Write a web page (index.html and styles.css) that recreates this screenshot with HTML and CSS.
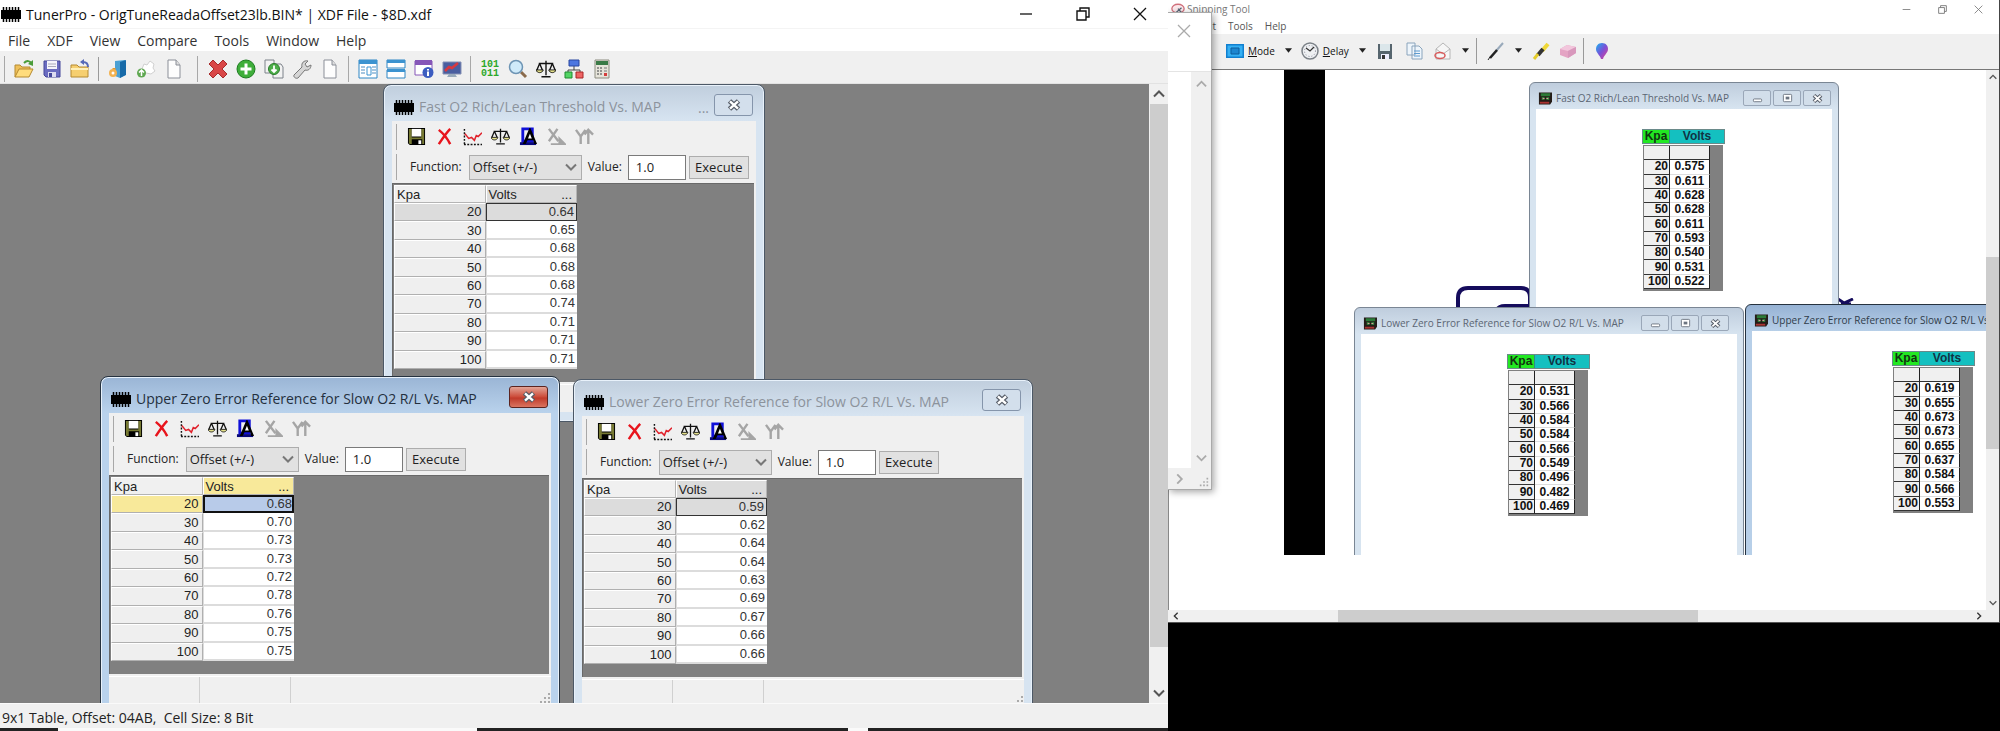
FILE: index.html
```html
<!DOCTYPE html>
<html lang="en">
<head>
<meta charset="utf-8">
<title>TunerPro</title>
<link rel="stylesheet" href="styles.css">
</head>
<body>
<svg class="defs" aria-hidden="true">
  <symbol id="chip" viewBox="0 0 20 15"><path d="M0 3h20v9H0z"/><path d="M2.500 0v15M5.500 0v15M8.500 0v15M11.500 0v15M14.500 0v15M17.500 0v15" stroke="#000" stroke-width="1.500"/></symbol>
  <symbol id="close" viewBox="0 0 14 12"><path d="M2.500 2l9 8M11.500 2l-9 8" stroke="#555b66" stroke-width="5"/><path d="M3 2.400l8 7.200M11 2.400l-8 7.200" stroke="#fff" stroke-width="2.400"/></symbol>
  <symbol id="mini" viewBox="0 0 12 12"><rect x="1.500" y="6.500" width="9" height="3" rx="1" fill="#fff" stroke="#6b7480"/></symbol>
  <symbol id="maxi" viewBox="0 0 12 12"><rect x="1.500" y="1.500" width="9" height="8" rx="1" fill="#fff" stroke="#6b7480"/><path d="M4 4h4v3H4z" fill="#6b7480"/></symbol>
  <symbol id="disk" viewBox="0 0 20 20"><path d="M1 1h18v18H3l-2-2z"/><path d="M2 2h3v9h10V2h3v16h-2v-5H5v5H3l-1-1z" fill="#777a33"/><path d="M5 2h10v8H5z" fill="#fff"/><path d="M12 14h3v4h-3z" fill="#fff"/></symbol>
  <symbol id="redx" viewBox="0 0 20 20"><path d="M4 3c5 4 9 9 12 15M16 2C12 6 8 12 4 18" fill="none" stroke="#e8141c" stroke-width="2.600"/></symbol>
  <symbol id="chart" viewBox="0 0 20 20"><path d="M1.500 2v17M1 18.500h19" stroke="#111" stroke-width="1.500" stroke-dasharray="2 1.500"/><path d="M2 7l4 5 3-1 3 3 2-5 2 1 4-4" fill="none" stroke="#e0202a" stroke-width="1.600"/></symbol>
  <symbol id="scales" viewBox="0 0 22 20"><path d="M11 1v16M6 18.500h10M3 4h16M4 4l-3 7M4 4l3 7M18 4l-3 7M18 4l3 7" fill="none" stroke="#111" stroke-width="1.500"/><path d="M0 11h8c-1 4-7 4-8 0zM14 11h8c-1 4-7 4-8 0z" fill="#e4e08a" stroke="#111"/></symbol>
  <symbol id="metro" viewBox="0 0 20 20"><path d="M4 2h10v13H4z" fill="none" stroke="#1010d8" stroke-width="3"/><path d="M1 16h17v3H1z" fill="#08087a"/><path d="M12 1l7 17h-3l-1-4H9l-2 4H4l7-17z"/><path d="M11.500 7l2 5h-4z" fill="#fff"/></symbol>
  <symbol id="xaxis" viewBox="0 0 20 20"><path d="M2 2l10 13M11 2L2 15" fill="none" stroke="#a5a5a5" stroke-width="2.500"/><path d="M4 18h15M13 12l6 6h-6z" fill="#a5a5a5" stroke="#a5a5a5" stroke-width="2"/></symbol>
  <symbol id="yaxis" viewBox="0 0 20 20"><path d="M1 3l5 7 5-7M6 10v8M14 18V3M10 8l4-5 5 5" fill="none" stroke="#a5a5a5" stroke-width="2.500"/></symbol>
  <symbol id="chev" viewBox="0 0 12 8"><path d="M1 1.500l5 5 5-5" fill="none" stroke="currentColor" stroke-width="2"/></symbol>
  <symbol id="grip" viewBox="0 0 12 12"><path d="M9 1h2v2H9zM5 5h2v2H5zM9 5h2v2H9zM1 9h2v2H1zM5 9h2v2H5zM9 9h2v2H9z" fill="#aaa"/></symbol>
  <symbol id="page" viewBox="0 0 20 20"><path d="M4 1h8l4 5v13H4z" fill="#fdfdfd" stroke="#8b8f98"/><path d="M12 1v5h4" fill="#ddd" stroke="#8b8f98"/></symbol>
  <symbol id="board" viewBox="0 0 15 13"><path d="M1 0h14v10l-2 3H1z" fill="#241c18"/><path d="M3 1h10v3H3zM4 5h3v3H4zM9 5h3v3H9z" fill="#2c7a38"/><path d="M2 10h10v2H2z" fill="#a33"/><path d="M5 6h2v1H5zM9 6h2v1H9z" fill="#d99"/></symbol>
  <symbol id="drop" viewBox="0 0 8 5"><path d="M0 0h8L4 5z" fill="#222"/></symbol>
  <symbol id="cross" viewBox="0 0 14 14"><path d="M1 1l12 12M13 1L1 13" stroke="currentColor" stroke-width="1.300"/></symbol>
  <symbol id="restore" viewBox="0 0 14 14"><path d="M1 4h9v9H1zM4 4V1h9v9h-3" fill="none" stroke="currentColor" stroke-width="1.400"/></symbol>
  <symbol id="dash" viewBox="0 0 14 14"><path d="M1 7h12" stroke="currentColor" stroke-width="1.300"/></symbol>
</svg>

<div class="screen">
<main class="tuner">
  <header class="tuner-title">
    <svg class="chip"><use href="#chip"/></svg>
    <h1>TunerPro - OrigTuneReadaOffset23lb.BIN* | XDF File - $8D.xdf</h1>
    <div class="sysbuttons">
      <button aria-label="Minimize"><svg><use href="#dash"/></svg></button>
      <button aria-label="Restore"><svg><use href="#restore"/></svg></button>
      <button aria-label="Close"><svg><use href="#cross"/></svg></button>
    </div>
  </header>
  <nav class="tuner-menu">
    <button>File</button><button>XDF</button><button>View</button><button>Compare</button><button>Tools</button><button>Window</button><button>Help</button>
  </nav>
  <div class="tuner-tools">
    <span class="handle"></span>
    <button aria-label="Open"><svg viewBox="0 0 20 20"><path d="M1 18V6h5l2 2h8v3" fill="#eec05a" stroke="#b58a30"/><path d="M1 18l4-8h14l-4 8z" fill="#ffdc7c" stroke="#b58a30"/><path d="M10 4c3-3 6-2 7 0" fill="none" stroke="#4a9c3a" stroke-width="2"/><path d="M19 1v6l-5-2z" fill="#4a9c3a"/></svg></button>
    <button aria-label="Save"><svg viewBox="0 0 20 20"><path d="M2 2h16v16H4l-2-2z" fill="#6a6cc0" stroke="#44479a"/><path d="M5 2h10v8H5z" fill="#f4f4fb"/><path d="M6 5h8M6 7.500h8" stroke="#aab"/><path d="M6 13h8v5H6z" fill="#dcdcf0"/><path d="M7 14h3v4H7z" fill="#44479a"/></svg></button>
    <button aria-label="Close file"><svg viewBox="0 0 20 20"><path d="M1 18V6h6l2 2h9v10z" fill="#f6cf70" stroke="#b58a30"/><path d="M1 10h17" stroke="#fff0b8" stroke-width="2"/><path d="M18 8c0-4-2-5-5-5" fill="none" stroke="#5669b8" stroke-width="2"/><path d="M14 0v6l-4-3z" fill="#5669b8"/></svg></button>
    <span class="rule"></span>
    <button aria-label="Load definition"><svg viewBox="0 0 20 20"><path d="M7 2l10-1v15l-5 3-5-2z" fill="#4aa0d4"/><path d="M12 3l6-2v15l-6 3z" fill="#176aa8"/><path d="M6 9v5" stroke="#e69a2c" stroke-width="3"/><circle cx="5" cy="14" r="4" fill="#f3b250"/><circle cx="5" cy="14" r="1.500" fill="#fff"/></svg></button>
    <button aria-label="New definition"><svg viewBox="0 0 20 20"><path d="M8 5l3 1 3-4 4 3-1 4 2 3-4 3-5-1-4-4z" fill="#fff" stroke="#d0d0d0"/><circle cx="5.500" cy="14" r="4.500" fill="#5fa851"/><path d="M5.500 11v6M3 13.500l2.500-2.500L8 13.500" fill="none" stroke="#fff" stroke-width="1.500"/></svg></button>
    <button aria-label="Blank"><svg><use href="#page"/></svg></button>
    <span class="handle wide"></span>
    <button aria-label="Delete"><svg viewBox="0 0 20 20"><path d="M5 1l5 5 5-5 4 4-5 5 5 5-4 4-5-5-5 5-4-4 5-5-5-5z" fill="#d94747" stroke="#a82c2c"/></svg></button>
    <button aria-label="Add"><svg viewBox="0 0 20 20"><circle cx="10" cy="10" r="9" fill="#3fae3a" stroke="#1d7c20"/><path d="M10 4.500v11M4.500 10h11" stroke="#fff" stroke-width="3"/></svg></button>
    <button aria-label="Duplicate"><svg viewBox="0 0 20 20"><path d="M1 1h9v13H1zM9 5h8l2 3v11H9z" fill="#f2f2f2" stroke="#7d828a"/><circle cx="10" cy="10" r="5.500" fill="#4cae48" stroke="#2a7c2a"/><path d="M10 6.500v6M7.500 10.500L10 13l2.500-2.500" fill="none" stroke="#fff" stroke-width="1.800"/></svg></button>
    <button aria-label="Settings"><svg viewBox="0 0 20 20"><path d="M2 16l8-8c-1-4 2-7 6-6l-3 3 2 3 4-2c0 4-3 6-6 5l-7 8c-2 1-5-1-4-3z" fill="#d6d6d6" stroke="#777"/></svg></button>
    <button aria-label="Notes"><svg><use href="#page"/></svg></button>
    <span class="handle"></span>
    <button aria-label="Tree view"><svg viewBox="0 0 20 20"><path d="M1 1h18v18H1z" fill="#fff" stroke="#2e86c4"/><path d="M1 1h18v4H1z" fill="#3c93d0"/><path d="M3 8h4M3 11h4M3 14h4M14 8h4M14 11h4M14 14h4" stroke="#89b4d6" stroke-width="1.500"/><path d="M9 8h4v8H9z" fill="none" stroke="#3c93d0"/></svg></button>
    <button aria-label="Tile"><svg viewBox="0 0 20 20"><path d="M1 1h18v8H1zM1 11h18v8H1z" fill="#fff" stroke="#2e86c4"/><path d="M1 1h18v3H1zM1 10h18v3H1z" fill="#3c93d0"/></svg></button>
    <button aria-label="Item info"><svg viewBox="0 0 20 20"><path d="M1 2h17v14H1z" fill="#fff" stroke="#8656b8"/><path d="M1 1h17v5H1z" fill="#8656b8"/><circle cx="14" cy="13.500" r="5.500" fill="#3c5cc0"/><path d="M14 10v1.500M14 12.500V17" stroke="#fff" stroke-width="2"/></svg></button>
    <button aria-label="Monitor"><svg viewBox="0 0 20 20"><path d="M1 3h18v12H1z" fill="#4a5ea0" stroke="#8490b4"/><path d="M3 12l4-4 3 1 6-5" fill="none" stroke="#d83840" stroke-width="2.500"/><path d="M7 15h6l2 3H5z" fill="#9ab"/></svg></button>
    <span class="handle"></span>
    <button aria-label="Hex editor" class="bits"><span>101</span><span>011</span></button>
    <button aria-label="Find"><svg viewBox="0 0 20 20"><path d="M13 13l5 5" stroke="#8a6a4c" stroke-width="3"/><circle cx="8" cy="8" r="6.500" fill="#cfeafa" stroke="#6d94b4" stroke-width="1.500"/></svg></button>
    <button aria-label="Compare"><svg><use href="#scales"/></svg></button>
    <button aria-label="Hierarchy"><svg viewBox="0 0 20 20"><path d="M10 7v4M4 13v-2h12v2" fill="none" stroke="#444"/><path d="M5 1h10v6H5z" fill="#4c76e0" stroke="#2846a0"/><path d="M1 13h7v6H1z" fill="#53d465" stroke="#218a30"/><path d="M12 13h7v6h-7z" fill="#ee6464" stroke="#a82424"/></svg></button>
    <button aria-label="Calculator"><svg viewBox="0 0 20 20"><path d="M3 1h14v18H3z" fill="#e6e4da" stroke="#8c8c80"/><path d="M4 2h12v4H4z" fill="#3a7a46"/><path d="M5 9h6M5 12h6M5 15h6" stroke="#777" stroke-width="1.600" stroke-dasharray="2 1"/><path d="M12 9h3M12 12h3" stroke="#777"/><path d="M12 14h3v3h-3z" fill="#d43c3c"/></svg></button>
  </div>

  <div class="desk">
    <div class="workspace">
      <section class="win fast">
        <header class="win-title"><svg class="chip"><use href="#chip"/></svg><h2>Fast O2 Rich/Lean Threshold Vs. MAP</h2><span class="more">...</span><button class="win-close" aria-label="Close"><svg><use href="#close"/></svg></button></header>
        <div class="client">
          <div class="icons"><span class="handle"></span><button aria-label="Save"><svg><use href="#disk"/></svg></button><button aria-label="Discard"><svg><use href="#redx"/></svg></button><button aria-label="Graph"><svg><use href="#chart"/></svg></button><button aria-label="Compare"><svg><use href="#scales"/></svg></button><button aria-label="Trace"><svg><use href="#metro"/></svg></button><button aria-label="X axis"><svg><use href="#xaxis"/></svg></button><button aria-label="Y axis"><svg><use href="#yaxis"/></svg></button></div>
          <div class="func"><span class="handle"></span><label for="f1">Function:</label><span class="pick"><select id="f1"><option>Offset (+/-)</option></select><svg><use href="#chev"/></svg></span><label for="v1">Value:</label><input id="v1" type="text" value="1.0"><button>Execute</button></div>
          <div class="sheet">
            <table>
              <thead><tr><th><span>Kpa</span></th><th class="sel"><span>Volts<i>...</i></span></th></tr></thead>
              <tbody>
                <tr class="cur"><th>20</th><td>0.64</td></tr><tr><th>30</th><td>0.65</td></tr><tr><th>40</th><td>0.68</td></tr><tr><th>50</th><td>0.68</td></tr><tr><th>60</th><td>0.68</td></tr><tr><th>70</th><td>0.74</td></tr><tr><th>80</th><td>0.71</td></tr><tr><th>90</th><td>0.71</td></tr><tr><th>100</th><td>0.71</td></tr>
              </tbody>
            </table>
          </div>
          <footer class="win-status"><span></span><span></span><svg><use href="#grip"/></svg></footer>
        </div>
      </section>

      <section class="win lower">
        <header class="win-title"><svg class="chip"><use href="#chip"/></svg><h2>Lower Zero Error Reference for Slow O2 R/L Vs. MAP</h2><button class="win-close" aria-label="Close"><svg><use href="#close"/></svg></button></header>
        <div class="client">
          <div class="icons"><span class="handle"></span><button aria-label="Save"><svg><use href="#disk"/></svg></button><button aria-label="Discard"><svg><use href="#redx"/></svg></button><button aria-label="Graph"><svg><use href="#chart"/></svg></button><button aria-label="Compare"><svg><use href="#scales"/></svg></button><button aria-label="Trace"><svg><use href="#metro"/></svg></button><button aria-label="X axis"><svg><use href="#xaxis"/></svg></button><button aria-label="Y axis"><svg><use href="#yaxis"/></svg></button></div>
          <div class="func"><span class="handle"></span><label for="f2">Function:</label><span class="pick"><select id="f2"><option>Offset (+/-)</option></select><svg><use href="#chev"/></svg></span><label for="v2">Value:</label><input id="v2" type="text" value="1.0"><button>Execute</button></div>
          <div class="sheet">
            <table>
              <thead><tr><th><span>Kpa</span></th><th class="sel"><span>Volts<i>...</i></span></th></tr></thead>
              <tbody>
                <tr class="cur"><th>20</th><td>0.59</td></tr><tr><th>30</th><td>0.62</td></tr><tr><th>40</th><td>0.64</td></tr><tr><th>50</th><td>0.64</td></tr><tr><th>60</th><td>0.63</td></tr><tr><th>70</th><td>0.69</td></tr><tr><th>80</th><td>0.67</td></tr><tr><th>90</th><td>0.66</td></tr><tr><th>100</th><td>0.66</td></tr>
              </tbody>
            </table>
          </div>
          <footer class="win-status"><span></span><span></span><svg><use href="#grip"/></svg></footer>
        </div>
      </section>

      <section class="win upper active">
        <header class="win-title"><svg class="chip"><use href="#chip"/></svg><h2>Upper Zero Error Reference for Slow O2 R/L Vs. MAP</h2><button class="win-close" aria-label="Close"><svg><use href="#close"/></svg></button></header>
        <div class="client">
          <div class="icons"><span class="handle"></span><button aria-label="Save"><svg><use href="#disk"/></svg></button><button aria-label="Discard"><svg><use href="#redx"/></svg></button><button aria-label="Graph"><svg><use href="#chart"/></svg></button><button aria-label="Compare"><svg><use href="#scales"/></svg></button><button aria-label="Trace"><svg><use href="#metro"/></svg></button><button aria-label="X axis"><svg><use href="#xaxis"/></svg></button><button aria-label="Y axis"><svg><use href="#yaxis"/></svg></button></div>
          <div class="func"><span class="handle"></span><label for="f3">Function:</label><span class="pick"><select id="f3"><option>Offset (+/-)</option></select><svg><use href="#chev"/></svg></span><label for="v3">Value:</label><input id="v3" type="text" value="1.0"><button>Execute</button></div>
          <div class="sheet">
            <table>
              <thead><tr><th><span>Kpa</span></th><th class="sel"><span>Volts<i>...</i></span></th></tr></thead>
              <tbody>
                <tr class="cur"><th>20</th><td>0.68</td></tr><tr><th>30</th><td>0.70</td></tr><tr><th>40</th><td>0.73</td></tr><tr><th>50</th><td>0.73</td></tr><tr><th>60</th><td>0.72</td></tr><tr><th>70</th><td>0.78</td></tr><tr><th>80</th><td>0.76</td></tr><tr><th>90</th><td>0.75</td></tr><tr><th>100</th><td>0.75</td></tr>
              </tbody>
            </table>
          </div>
          <footer class="win-status"><span></span><span></span><svg><use href="#grip"/></svg></footer>
        </div>
      </section>
    </div>
    <div class="vscroll">
      <button aria-label="Scroll up"><svg class="flip"><use href="#chev"/></svg></button>
      <div class="thumb"></div>
      <div class="track"></div>
      <button aria-label="Scroll down"><svg><use href="#chev"/></svg></button>
    </div>
  </div>
  <footer class="tuner-status">9x1 Table, Offset: 04AB,&nbsp; Cell Size: 8 Bit</footer>
  <div class="edge"><span class="dark a"></span><span class="light b"></span><span class="dark c"></span><span class="light d"></span><span class="dark e"></span></div>
</main>

<aside class="right">
  <section class="snip">
    <header class="snip-title">
      <svg class="logo" viewBox="0 0 16 14"><ellipse cx="8" cy="6" rx="7" ry="5" fill="#fbe9ec" stroke="#d0707c" stroke-width="1.500"/><path d="M4 12l8-7M8 6l6 7" stroke="#567" stroke-width="1.500"/></svg>
      <h1>Snipping Tool</h1>
      <div class="sysbuttons">
        <button aria-label="Minimize"><svg><use href="#dash"/></svg></button>
        <button aria-label="Restore"><svg><use href="#restore"/></svg></button>
        <button aria-label="Close"><svg><use href="#cross"/></svg></button>
      </div>
    </header>
    <nav class="snip-menu"><button class="edit">Edit</button><button>Tools</button><button>Help</button></nav>
    <div class="snip-tools">
      <button class="mode"><svg class="i18" viewBox="0 0 18 14"><path d="M0 0h18v14H0z" fill="#1180d0"/><path d="M1.500 1.500h15v11h-15z" fill="#35b0f4"/><path d="M5 4h8v6H5z" fill="#1d86d0" stroke="#0d5c9c"/></svg><span><u>M</u>ode</span><svg class="arrow"><use href="#drop"/></svg></button>
      <button class="delay"><svg class="i18" viewBox="0 0 18 18"><circle cx="9" cy="9" r="8" fill="#eef0f2" stroke="#7c8288" stroke-width="1.500"/><circle cx="9" cy="9" r="5.500" fill="none" stroke="#889" stroke-dasharray="1 2"/><path d="M5 6l4 3 4-4" fill="none" stroke="#333" stroke-width="1.200"/></svg><span><u>D</u>elay</span><svg class="arrow"><use href="#drop"/></svg></button>
      <button class="solo" aria-label="Save snip"><svg class="i18" viewBox="0 0 18 18"><path d="M2 2h14v15H2z" fill="#56656e"/><path d="M4 2h10v7H4z" fill="#dbe6ea"/><path d="M5 12h8v5H5z" fill="#eef"/><path d="M6 13h3v4H6z" fill="#333"/></svg></button>
      <button class="solo" aria-label="Copy"><svg class="i18" viewBox="0 0 18 18"><path d="M2 1h8v12H2zM7 4h7l3 3v10H7z" fill="#eef5fb" stroke="#8aa4bc"/><path d="M9 9h6M9 11.500h6M9 14h6" stroke="#5c9bd0"/></svg></button>
      <button class="solo" aria-label="Send"><svg class="i18" viewBox="0 0 18 18"><path d="M2 7l7-6 7 6v10H2z" fill="#f6f6f6" stroke="#b6b6b6"/><path d="M2 7l7 5 7-5" fill="none" stroke="#b6b6b6"/><ellipse cx="6" cy="13.500" rx="5" ry="3" fill="none" stroke="#d85a5a" stroke-width="1.500"/></svg><svg class="arrow"><use href="#drop"/></svg></button>
      <span class="bar"></span>
      <button class="solo" aria-label="Pen"><svg class="i18" viewBox="0 0 18 18"><path d="M16 1L9 9" stroke="#9ab" stroke-width="2"/><path d="M10 8l-7 8" stroke="#222" stroke-width="2.500"/><path d="M3 15l-2 3" stroke="#222"/></svg><svg class="arrow"><use href="#drop"/></svg></button>
      <button aria-label="Highlighter"><svg class="i18" viewBox="0 0 18 18"><path d="M16 2L10 9" stroke="#f0d838" stroke-width="4"/><path d="M11 7l-5 6" stroke="#333" stroke-width="4"/><path d="M6 12l-4 5" stroke="#e4cc2c" stroke-width="3"/></svg></button>
      <button aria-label="Eraser"><svg class="i18" viewBox="0 0 18 18"><path d="M1 7l7-4 9 2v6l-8 5-8-3z" fill="#e4a4c4"/><path d="M1 7l7-4 9 2-8 4z" fill="#f2c6dc"/><path d="M9 9v7l8-5V5z" fill="#d898bc"/></svg></button>
      <span class="bar"></span>
      <button aria-label="Edit with Paint 3D"><svg class="i18" viewBox="0 0 18 18"><defs><linearGradient id="pin" x1="0" x2="1" y2="1"><stop offset="0" stop-color="#18b4f0"/><stop offset=".5" stop-color="#7a50d8"/><stop offset="1" stop-color="#e8408c"/></linearGradient></defs><path d="M9 1c4 0 6 3 6 6 0 4-4 6-5 10H8c-1-4-5-6-5-10 0-3 2-6 6-6z" fill="url(#pin)"/></svg></button>
    </div>
    <div class="snip-body">
      <div class="canvas">
        <div class="shot">
          <svg class="scribble" viewBox="0 0 420 240"><path d="M133 240v-12q0-10 10-10h53q9 0 9 9v13M172 240q2-4 8-4h26" fill="none" stroke="#150c5c" stroke-width="4"/></svg>
          <svg class="scribble-end" viewBox="0 0 16 8"><path d="M0 1l6 4 9-4M3 6h10" fill="none" stroke="#150c5c" stroke-width="3"/></svg>
          <section class="mini-win m-fast">
            <header><svg class="board"><use href="#board"/></svg><h2>Fast O2 Rich/Lean Threshold Vs. MAP</h2><div class="mini-btns"><button aria-label="Minimize"><svg><use href="#mini"/></svg></button><button aria-label="Maximize"><svg><use href="#maxi"/></svg></button><button aria-label="Close"><svg><use href="#close"/></svg></button></div></header>
            <div class="mini-client"><div class="grid"><div class="caps"><b>Kpa</b><b>Volts</b></div><table>
              <tr class="blank"><th></th><td></td></tr><tr><th>20</th><td>0.575</td></tr><tr><th>30</th><td>0.611</td></tr><tr><th>40</th><td>0.628</td></tr><tr><th>50</th><td>0.628</td></tr><tr><th>60</th><td>0.611</td></tr><tr><th>70</th><td>0.593</td></tr><tr><th>80</th><td>0.540</td></tr><tr><th>90</th><td>0.531</td></tr><tr><th>100</th><td>0.522</td></tr></table></div></div>
          </section>
          <section class="mini-win m-lower">
            <header><svg class="board"><use href="#board"/></svg><h2>Lower Zero Error Reference for Slow O2 R/L Vs. MAP</h2><div class="mini-btns"><button aria-label="Minimize"><svg><use href="#mini"/></svg></button><button aria-label="Maximize"><svg><use href="#maxi"/></svg></button><button aria-label="Close"><svg><use href="#close"/></svg></button></div></header>
            <div class="mini-client"><div class="grid"><div class="caps"><b>Kpa</b><b>Volts</b></div><table>
              <tr class="blank"><th></th><td></td></tr><tr><th>20</th><td>0.531</td></tr><tr><th>30</th><td>0.566</td></tr><tr><th>40</th><td>0.584</td></tr><tr><th>50</th><td>0.584</td></tr><tr><th>60</th><td>0.566</td></tr><tr><th>70</th><td>0.549</td></tr><tr><th>80</th><td>0.496</td></tr><tr><th>90</th><td>0.482</td></tr><tr><th>100</th><td>0.469</td></tr></table></div></div>
          </section>
          <section class="mini-win m-upper">
            <header><svg class="board"><use href="#board"/></svg><h2>Upper Zero Error Reference for Slow O2 R/L Vs. MAP</h2></header>
            <div class="mini-client"><div class="grid"><div class="caps"><b>Kpa</b><b>Volts</b></div><table>
              <tr class="blank"><th></th><td></td></tr><tr><th>20</th><td>0.619</td></tr><tr><th>30</th><td>0.655</td></tr><tr><th>40</th><td>0.673</td></tr><tr><th>50</th><td>0.673</td></tr><tr><th>60</th><td>0.655</td></tr><tr><th>70</th><td>0.637</td></tr><tr><th>80</th><td>0.584</td></tr><tr><th>90</th><td>0.566</td></tr><tr><th>100</th><td>0.553</td></tr></table></div></div>
          </section>
        </div>
      </div>
      <div class="vscroll thin">
        <button aria-label="Scroll up"><svg class="flip"><use href="#chev"/></svg></button>
        <div class="track"></div>
        <div class="thumb"></div>
        <div class="track after"></div>
        <button aria-label="Scroll down"><svg><use href="#chev"/></svg></button>
      </div>
    </div>
    <div class="hscroll">
      <button aria-label="Scroll left"><svg class="left"><use href="#chev"/></svg></button>
      <div class="track"></div><div class="thumb"></div><div class="track after"></div>
      <button aria-label="Scroll right"><svg class="rightward"><use href="#chev"/></svg></button>
    </div>
  </section>
  <section class="popup">
    <header><button aria-label="Close"><svg><use href="#cross"/></svg></button></header>
    <div class="popup-body">
      <div class="popup-page"></div>
      <div class="popup-scroll"><svg class="flip"><use href="#chev"/></svg><svg><use href="#chev"/></svg></div>
    </div>
    <footer><svg class="rightward"><use href="#chev"/></svg><svg class="corner"><use href="#grip"/></svg></footer>
  </section>
</aside>
</div>
</body>
</html>
```

FILE: styles.css
```css
* { box-sizing: border-box; }
body { margin: 0; background: #000; color: #222; font-family: "Open Sans", "Noto Sans", sans-serif; font-size: 14px; }
h1, h2 { margin: 0; font-weight: 400; white-space: nowrap; }
button { border: 0; padding: 0; background: none; color: inherit; font: inherit; display: flex; align-items: center; justify-content: center; }
table { border-collapse: separate; border-spacing: 0; }
th, td { padding: 0; }
.defs { position: absolute; width: 0; height: 0; }
.screen { display: flex; height: 100vh; overflow: hidden; }
.chip { width: 20px; height: 15px; flex: none; }
.flip { transform: rotate(180deg); }
.left { transform: rotate(90deg); }
.rightward { transform: rotate(-90deg); }

/* TunerPro frame */
.tuner { width: 58.4%; flex: none; display: flex; flex-direction: column; background: #f0f0f0; }
.tuner-title { height: 29px; background: #fff; display: flex; align-items: center; padding-left: 1px; gap: 5px; border-bottom: 1px solid #f4f4f4; color: #111; }
.tuner-title h1 { font-size: 14px; }
.sysbuttons { margin-left: auto; display: flex; }
.tuner-title .sysbuttons button { width: 57px; }
.sysbuttons svg { width: 14px; height: 14px; }
.tuner-menu { height: 22px; background: #fff; display: flex; align-items: center; gap: 17px; padding-left: 8px; color: #333; }
.tuner-tools { height: 33px; display: flex; align-items: center; padding-top: 3px; border-bottom: 1px solid #e2e2e2; }
.tuner-tools button { width: 28px; height: 28px; }
.tuner-tools svg { width: 20px; height: 20px; }
.handle { flex: none; width: 10px; height: 26px; background: linear-gradient(#a8a8a8, #a8a8a8) 4px 0 / 1px 100% no-repeat; }
.handle.wide { width: 16px; background-position: 9px 0; }
.rule { width: 10px; height: 24px; background: linear-gradient(#9a9a9a, #9a9a9a) 4px 0 / 1px 100% no-repeat; }
.tuner-tools .bits { flex-direction: column; font: bold 10px/9px "Liberation Mono", monospace; color: #2da82a; }
.desk { flex: 1; display: flex; min-height: 0; }
.workspace { flex: 1; position: relative; overflow: hidden; background: #808080; }
.vscroll { width: 19px; flex: none; display: flex; flex-direction: column; background: #f0f0f0; color: #555; }
.vscroll button { height: 20px; }
.vscroll svg { width: 12px; height: 8px; }
.vscroll .thumb { flex: 543; background: #cdcdcd; margin-left: 1px; }
.vscroll .track { flex: 36; }
.tuner-status { height: 25px; padding: 4px 2px 0; line-height: 20px; font-size: 14px; border-top: 1px solid #fafafa; white-space: nowrap; }
.edge { height: 3px; display: flex; }
.dark { background: #222; }
.light { background: #fafafa; }
.a { flex: 58; } .b { flex: 419; } .c { flex: 371; } .d { flex: 20; } .e { flex: 300; }

/* Table windows */
.win { position: absolute; height: 338px; display: flex; flex-direction: column; padding: 0 8px 9px; border: 1px solid #4c5866; border-radius: 8px 8px 0 0; background: linear-gradient(#c0cedd, #d7e4f1 36px); box-shadow: inset 0 0 0 1px #e8f1fa; color: #8c939c; }
.fast { left: 383px; top: 0; width: 382px; }
.upper { left: 100px; top: 292px; width: 460px; }
.lower { left: 573px; top: 295px; width: 460px; }
.win.active { background: linear-gradient(#9ab5d5, #b9d2ec 36px); border-color: #26323f; color: #24303e; }
.win-title { height: 36px; display: flex; align-items: center; padding: 8px 3px 0 2px; flex: none; gap: 5px; }
.win-title h2 { font-size: 14px; line-height: 24px; }
.more { margin-left: auto; }
.win-close { width: 39px; height: 22px; margin-left: auto; margin-bottom: 4px; flex: none; border: 1px solid #8595ab; border-radius: 3px; background: #d3dfec; }
.more + .win-close { margin-left: 0; }
.win-close svg { width: 14px; height: 12px; }
.active .win-close { border-color: #5c2420; background: linear-gradient(#e3a597, #cc4a38 50%, #c03a2a 55%, #da7460); }
.client { flex: 1; min-height: 0; display: flex; flex-direction: column; background: #f0f0f0; color: #222; font-size: 13px; }
.icons, .func { height: 31px; flex: none; display: flex; align-items: center; }
.icons button { width: 28px; height: 28px; }
.icons svg { width: 19px; height: 19px; }
.func { padding-bottom: 1px; }
.func label { margin: 0 7px 0 8px; line-height: 20px; font-size: 12px; }
.func .pick + label { margin-left: 6px; margin-right: 6px; }
.pick { display: grid; align-items: center; width: 113px; height: 25px; }
.pick select, .pick svg { grid-area: 1 / 1; }
.pick select { appearance: none; width: 100%; height: 100%; border: 1px solid #adadad; border-radius: 0; background: #e1e1e1; padding: 0 3px; font: inherit; color: inherit; }
.pick svg { width: 12px; height: 8px; justify-self: end; margin-right: 5px; color: #777; pointer-events: none; }
.func input { width: 58px; height: 25px; border: 1px solid #7a7a7a; padding: 0 7px; background: #fff; font: inherit; color: inherit; }
.func button { width: 60px; height: 23px; margin-left: 3px; border: 1px solid #adadad; background: #e1e1e1; }
.sheet { flex: 1; min-height: 0; margin: 0 2px 2px 0; background: #808080; border-top: 1px solid #696969; border-left: 1px solid #696969; padding: 1px; font-family: "Liberation Sans", sans-serif; font-size: 13px; overflow: hidden; }
.sheet table { background: #e6e6e6; table-layout: fixed; width: 183px; height: 184px; }
.sheet th { font-weight: 400; }
.sheet thead th { height: 18px; border: 1px solid #b4b4b4; border-left-color: #fff; border-top-color: #fff; background: #f0f0f0; }
.sheet thead span { display: flex; justify-content: space-between; height: 16px; line-height: 18px; padding: 0 4px 0 2px; }
.sheet i { font-style: normal; }
.sheet thead .sel { background: #dcdcdc; }
.sheet tbody th, .sheet td { height: 18px; line-height: 16px; text-align: right; }
.sheet tbody th { padding: 0 3px 0 0; border: 1px solid #b0b0b0; border-left-color: #fff; border-top-color: #fff; background: #efefef; }
.sheet td { padding-right: 2px; background: #fff; border: 1px solid #dcdcdc; border-width: 0 0 2px 1px; color: #333; }
.sheet .cur th { background: #dcdcdc; }
.sheet .cur td { background: #dcdcdc; border: 1px solid #333; }
.active .sheet .cur th, .active .sheet .sel { background: #f8e99a; }
.active .sheet .cur td { background: #b8cbe9; border: 2px solid #111; line-height: 14px; padding-right: 0; }
.win-status { height: 28px; flex: none; display: flex; align-items: flex-end; border-top: 1px solid #fff; }
.win-status span { width: 91px; height: 100%; border-right: 1px solid #d0d0d0; }
.win-status svg { width: 12px; height: 12px; margin-left: auto; }

/* Snipping Tool */
.right { flex: 1; position: relative; min-width: 0; overflow: hidden; font-size: 10px; }
.snip { background: #fff; border-right: 1px solid #444; }
.snip-title { height: 18px; display: flex; align-items: center; padding-left: 3px; gap: 2px; color: #777; }
.snip-title h1 { font-size: 10px; }
.logo { width: 14px; height: 13px; }
.snip-title .sysbuttons button { width: 36px; }
.snip-title .sysbuttons svg { width: 9px; height: 9px; }
.snip-title .sysbuttons { padding-right: 3px; }
.snip-menu { height: 16px; display: flex; align-items: center; gap: 12px; color: #555; }
.snip-menu .edit { width: 48px; justify-content: flex-end; }
.snip-tools { height: 36px; padding: 0 0 2px 58px; background: #f0f0f0; border-bottom: 1px solid #777; display: flex; align-items: center; gap: 9px; color: #111; }
.snip-tools button { gap: 4px; }
.snip-tools .solo { padding: 0 1px; }
.i18 { width: 18px; height: 18px; }
.mode .i18 { height: 14px; }
.arrow { width: 7px; height: 5px; margin-left: 6px; }
.bar { width: 1px; height: 26px; background: #999; margin: 0 0 0 -3px; }
.snip-body { display: flex; }
.canvas { flex: 1; min-width: 0; padding: 0 0 55px 115px; border-left: 1px solid #888; }
.shot { height: 485px; position: relative; overflow: hidden; border-left: 41px solid #000; background: #fff; }
.scribble { position: absolute; left: 0; top: 0; width: 420px; height: 240px; }
.scribble-end { position: absolute; left: 513px; top: 228px; width: 16px; height: 8px; }
.mini-win { position: absolute; height: 330px; padding: 0 6px; border: 1px solid #7a8694; border-radius: 6px 6px 0 0; background: linear-gradient(#bfcddd, #d7e4f0 26px); color: #5c6674; }
.m-fast { left: 204px; top: 12px; width: 310px; }
.m-lower { left: 29px; top: 237px; width: 390px; }
.m-upper { left: 420px; top: 234px; width: 390px; background: linear-gradient(#96b2d4, #b7cfe8 26px); border-color: #26323f; color: #303c4a; }
.mini-win header { height: 26px; display: flex; align-items: center; padding: 4px 1px 0 2px; gap: 4px; }
.m-lower header { padding-right: 8px; }
.mini-win h2 { font-size: 10px; line-height: 18px; }
.board { width: 14px; height: 13px; flex: none; }
.mini-btns { display: flex; gap: 2px; margin-left: auto; }
.mini-btns button { width: 28px; height: 16px; border: 1px solid #9aa7b8; border-radius: 2px; background: #d2deea; }
.mini-btns svg { width: 11px; height: 11px; }
.mini-client { height: 100%; background: #fff; padding: 20px 0 0 106px; }
.m-lower .mini-client { padding-left: 146px; }
.m-upper .mini-client { padding-left: 140px; }
.grid { width: 83px; font: bold 12px/13px "Liberation Sans", sans-serif; color: #111; }
.caps { display: flex; height: 15px; border: 1px solid #6a8a8a; margin-bottom: 1px; }
.caps b { flex: 1; background: #14c0c0; text-align: center; color: #134; }
.caps b:first-child { flex: 0 0 27px; background: #22e822; border-right: 1px solid #388; color: #131; }
.grid table { width: 80px; height: 146px; margin-left: 1px; border: 1px solid #808080; border-width: 1px 13px 2px 1px; background: #fff; }
.grid th, .grid td { height: 14px; }
.grid th { width: 26px; text-align: right; padding-right: 1px; background: #f0f0f0; border-right: 1px solid #222; border-bottom: 1px solid #333; }
.grid td { text-align: center; border-right: 1px solid #222; border-bottom: 1px solid #ddd; }
.grid .blank td { background: #f0f0f0; border-bottom-color: #333; }
.grid tr:last-child td { border-bottom-color: #333; }
.thin { width: 13px; }
.thin button { height: 14px; }
.thin svg, .hscroll svg { width: 8px; height: 6px; }
.thin .track { flex: 173; }
.thin .thumb { flex: 192; margin: 0; }
.thin .after { flex: 147; }
.hscroll { height: 13px; display: flex; padding-right: 13px; background: #f0f0f0; border-bottom: 1px solid #555; color: #333; }
.hscroll button { width: 15px; }
.hscroll .track { flex: 155; }
.hscroll .thumb { flex: 359; background: #cdcdcd; }
.hscroll .after { flex: 273; }

/* Dialog edge overlapping the Snipping Tool */
.popup { position: absolute; left: 0; top: 12px; width: 44px; height: 478px; display: flex; flex-direction: column; background: #fff; border: 1px solid #aaa; border-left: 0; box-shadow: 2px 2px 7px rgba(0, 0, 0, .35); color: #aaa; }
.popup header { height: 59px; border-bottom: 1px solid #e4e4e4; padding: 11px 0 0 9px; }
.popup header svg { width: 14px; height: 14px; }
.popup-body { flex: 1; display: flex; }
.popup-page { flex: 1; }
.popup-scroll { width: 20px; background: #f0f0f0; display: flex; flex-direction: column; justify-content: space-between; align-items: center; padding: 8px 0 6px; }
.popup-scroll svg, .popup footer svg { width: 11px; height: 8px; }
.popup footer { height: 21px; background: #f0f0f0; display: flex; align-items: center; justify-content: space-between; padding: 0 2px 0 6px; }
.popup footer .corner { width: 10px; height: 10px; align-self: flex-end; margin-bottom: 2px; }
```
